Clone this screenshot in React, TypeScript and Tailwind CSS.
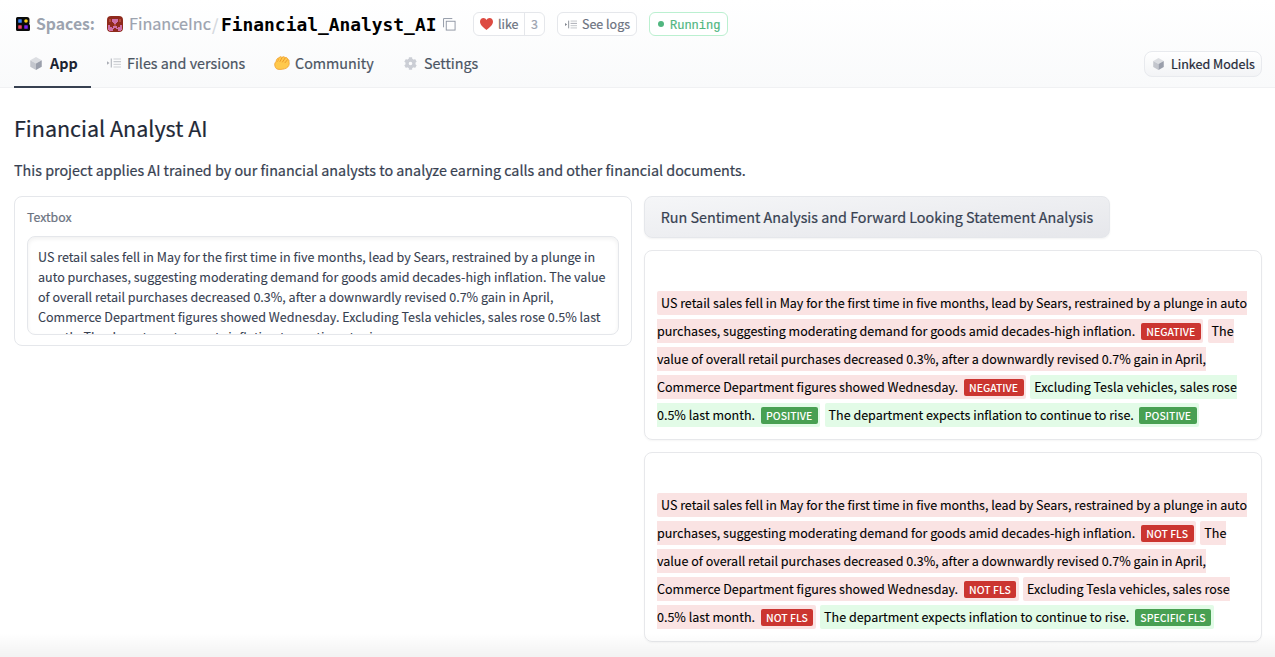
import type { ReactNode } from "react";

type Tone = "red" | "green";
type Segment = { lines: string[]; label: string; tone: Tone };

const SENTIMENT: Segment[] = [
  {
    lines: [
      "US retail sales fell in May for the first time in five months, lead by Sears, restrained by a plunge in auto",
      "purchases, suggesting moderating demand for goods amid decades-high inflation.",
    ],
    label: "NEGATIVE",
    tone: "red",
  },
  {
    lines: [
      "The",
      "value of overall retail purchases decreased 0.3%, after a downwardly revised 0.7% gain in April,",
      "Commerce Department figures showed Wednesday.",
    ],
    label: "NEGATIVE",
    tone: "red",
  },
  { lines: ["Excluding Tesla vehicles, sales rose", "0.5% last month."], label: "POSITIVE", tone: "green" },
  { lines: ["The department expects inflation to continue to rise."], label: "POSITIVE", tone: "green" },
];

const FORWARD_LOOKING: Segment[] = [
  { ...SENTIMENT[0], label: "NOT FLS" },
  { ...SENTIMENT[1], label: "NOT FLS" },
  { ...SENTIMENT[2], label: "NOT FLS", tone: "red" },
  { ...SENTIMENT[3], label: "SPECIFIC FLS" },
];

function SpacesLogo() {
  return (
    <svg viewBox="0 0 28 28" className="h-[14px] w-[14px] shrink-0">
      <path d="M3 0h19a5 5 0 0 1 5 5v5a4 4 0 0 1-1 4 4 4 0 0 1 2 3v8a3 3 0 0 1-3 3H3a3 3 0 0 1-3-3V3a3 3 0 0 1 3-3z" fill="#0a0a0a" />
      <rect x="4.5" y="4.5" width="7" height="7" rx="1" fill="#3b82f6" />
      <circle cx="20" cy="8" r="3.6" fill="#facc15" />
      <rect x="4.5" y="16.5" width="7" height="7" rx="1" fill="#ef4464" />
      <rect x="16.5" y="16.5" width="7" height="7" rx="1" fill="#7c22ee" />
    </svg>
  );
}

function Avatar() {
  return (
    <svg viewBox="0 0 16 16" className="h-4 w-4 shrink-0 rounded-[4px]">
      <rect width="16" height="16" fill="#8f2a1c" />
      <path fill="#cf6fa8" d="M5 3h6v3h-1v1H9v1H7V7H6V6H5zM1 9h2v2h2v1h1v-2h4v2h1v-1h2V9h2v5h-1v1h-3v-2H9v-1H7v1H6v2H2v-1H1z" />
      <path fill="#b5483a" d="M2 3h2v3H2zM12 3h2v3h-2zM7 8h2v2H7z" />
    </svg>
  );
}

function Cube({ className }: { className: string }) {
  return (
    <svg viewBox="0 0 24 26" className={className}>
      <path d="M12 0 23.5 6.5 12 13 .5 6.5z" fill="#dcdee2" />
      <path d="M.5 6.5 12 13v13L.5 19.5z" fill="#c3c6cd" />
      <path d="M23.5 6.5 12 13v13l11.5-6.5z" fill="#9a9fab" />
    </svg>
  );
}

function LogLines({ className }: { className: string }) {
  return (
    <svg viewBox="0 0 28 20" className={className} fill="none">
      <path d="M0 6.5 5 10 0 13.5z" fill="currentColor" />
      <path d="M8.5 1v18" stroke="currentColor" strokeWidth="2" />
      <path d="M13 2h15M13 12.7h15M13 18h15" stroke="currentColor" strokeWidth="2" opacity=".55" />
      <path d="M13 7.4h15" stroke="currentColor" strokeWidth="2" opacity=".8" />
    </svg>
  );
}

function Clap() {
  return (
    <svg viewBox="0 0 32 28" className="h-[14px] w-4 shrink-0">
      <path
        d="M1.5 18c-.5-3 1-5 2.500-7C5 7 7 3.500 9.500 4 11 1 15 .5 16 3c2-2.500 5.500-2 6 .5 2.500-1 5.500 0 5 3 3 .5 3.500 3 3 5 1.500 6-1 10-5 12.500-4 2.500-12 3.500-17.500 2.500C3.500 25.500 2 22 1.500 18z"
        fill="#ffc94d"
        stroke="#f0a030"
        strokeWidth="1.6"
      />
      <path d="M16 3.500 12 11M22 4.500 17 12M27 7.500 22 13.500" stroke="#eb9426" strokeWidth="1.8" strokeLinecap="round" fill="none" />
      <path d="M9.500 5C9 9 7.500 11 5.500 12" stroke="#f0a030" strokeWidth="1.500" fill="none" />
    </svg>
  );
}

function Gear() {
  return (
    <svg viewBox="0 0 24 24" className="h-[13px] w-[13px] shrink-0">
      <g stroke="#cbced5" strokeWidth="6">
        <path d="M12 .5v4M12 19.5v4M2 6.3l3.5 2M18.5 15.7l3.5 2M22 6.3l-3.5 2M5.5 15.7 2 17.7" />
      </g>
      <circle cx="12" cy="12" r="6.3" fill="none" stroke="#cbced5" strokeWidth="6" />
    </svg>
  );
}

function CopyIcon() {
  return (
    <svg viewBox="0 0 14 14" className="h-[13px] w-[13px] shrink-0" fill="none" stroke="#8d94a1">
      <rect x="3.5" y="3.5" width="9.5" height="9.5" />
      <path d="M.6 10V.6H10" />
    </svg>
  );
}

function Heart() {
  return (
    <svg viewBox="0 0 26 24" className="h-3 w-[13px] shrink-0">
      <path d="M13 24C9 20 0 15 0 7.5 0 3 3 0 6.8 0 9.5 0 12 1.5 13 4c1-2.5 3.5-4 6.2-4C23 0 26 3 26 7.5 26 15 17 20 13 24z" fill="#dd4b42" />
    </svg>
  );
}

function Highlight({ lines, label, tone }: Segment) {
  const red = tone === "red";
  return (
    <span className={`mr-[4.3px] rounded-[2px] pt-[1.5px] pr-[2.5px] pb-[3.5px] pl-1 ${red ? "bg-[#fae3e3]" : "bg-[#e2fbe7]"}`}>
      {lines.map((line, i) => (
        <span key={line}>
          {i > 0 && <br />}
          {line}
        </span>
      ))}
      <span
        className={`ml-[5.5px] rounded-[2px] px-[5.5px] py-px align-[-1px] text-[10.45px] leading-none font-medium text-white [-webkit-text-stroke:0] ${red ? "bg-[#cb3530]" : "bg-[#48a052]"}`}
      >
        {label}
      </span>
    </span>
  );
}

function ResultCard({ segments }: { segments: Segment[] }) {
  return (
    <section className="h-[190px] rounded-lg border border-[#e7e8eb] px-3 pt-[37px] shadow-[0_1px_2px_rgba(0,0,0,0.04)]">
      <p className="text-[12.53px] leading-7 whitespace-nowrap text-black [-webkit-text-stroke:0.1px_currentColor]">
        {segments.map((segment) => (
          <Highlight key={segment.lines[0]} {...segment} />
        ))}
      </p>
    </section>
  );
}

function Tab({ icon, children, className }: { icon: ReactNode; children: ReactNode; className: string }) {
  return (
    <a className={`flex h-12 items-center text-[14.33px] ${className}`}>
      {icon}
      {children}
    </a>
  );
}

export default function App() {
  return (
    <div className="relative h-[657px] w-[1275px] overflow-hidden bg-white font-['Noto_Sans_CJK_SC',sans-serif] whitespace-nowrap [-webkit-text-stroke:0.2px_currentColor]">
      <header className="h-[88px] border-b border-[#f0f1f3] bg-linear-to-b from-white to-[#f9fafb] pr-[13px] pl-[14px]">
        <div className="flex h-10 items-center pt-2 leading-6">
          <div className="ml-[2px] flex w-[91px] items-center gap-[6px] text-[15.76px] font-bold text-[#9ca3af] [-webkit-text-stroke:0]">
            <SpacesLogo />
            Spaces:
          </div>
          <Avatar />
          <span className="-mt-[2px] ml-[6px] w-[83px] text-[16.2px] text-[#9ca3af]">FinanceInc</span>
          <span className="w-[9px] text-[16px] text-[#d1d5db]">/</span>
          <h1 className="w-[217px] pt-px font-['DejaVu_Sans_Mono',monospace] text-[17.9px] font-bold text-black [-webkit-text-stroke:0]">
            Financial_Analyst_AI
          </h1>
          <div className="ml-[5px] flex w-[30px]">
            <CopyIcon />
          </div>
          <div className="flex h-6 w-[72px] items-center rounded-md border border-[#e5e7eb] bg-white text-[12.46px] text-[#6b7280]">
            <span className="flex w-[50px] items-center gap-[5px] pl-[6px]">
              <Heart />
              like
            </span>
            <span className="flex h-full flex-1 items-center justify-center border-l border-[#e5e7eb] text-[#9ca3af]">3</span>
          </div>
          <div className="ml-[12px] flex h-6 w-[80px] items-center gap-[5px] rounded-md border border-[#e5e7eb] bg-white pl-[7px] text-[12.47px] text-[#6b7280]">
            <LogLines className="h-[9px] w-3 shrink-0 text-[#81868f]" />
            See logs
          </div>
          <div className="ml-[12px] flex h-6 w-[79px] items-center gap-[6px] rounded-md border border-[#bbf0d0] bg-white pl-2 font-['Liberation_Mono',monospace] text-xs text-[#50b67f]">
            <span className="h-[6px] w-[6px] rounded-full bg-[#50b67f]" />
            <span className="pt-[3px]">Running</span>
          </div>
        </div>
        <nav className="flex items-start">
          <Tab
            className="w-[77px] border-b-2 border-[#374151] pl-4 font-bold text-[#1b2331] [-webkit-text-stroke:0]"
            icon={<Cube className="mr-2 h-[13px] w-3 shrink-0" />}
          >
            App
          </Tab>
          <Tab
            className="ml-[16px] w-[167px] pb-[2px] text-[#4b5563]"
            icon={<LogLines className="mr-[6px] h-[10px] w-[14px] shrink-0 text-[#a9adb5]" />}
          >
            Files and versions
          </Tab>
          <Tab className="w-[130px] gap-[5px] pb-[2px] text-[#4b5563]" icon={<Clap />}>
            Community
          </Tab>
          <Tab className="w-[76px] gap-[7px] pb-[2px] text-[#4b5563]" icon={<Gear />}>
            Settings
          </Tab>
          <a className="mt-[11px] ml-auto flex h-[26px] w-[118px] items-center rounded-lg border border-[#e8eaee] bg-linear-to-b from-white to-[#f3f4f6] pl-2 text-[12.53px] text-[#1f2937]">
            <Cube className="mr-[7px] h-3 w-[11px] shrink-0" />
            Linked Models
          </a>
        </nav>
      </header>

      <main className="px-[14px] pt-[24px]">
        <h2 className="text-[21.5px] leading-8 text-[#1f2937]">Financial Analyst AI</h2>
        <p className="mt-[14px] text-[14.33px] leading-6 text-[#374151]">
          This project applies AI trained by our financial analysts to analyze earning calls and other financial documents.
        </p>

        <div className="mt-[14px] grid grid-cols-[618px_618px] items-start gap-3">
          <section className="h-[150px] rounded-lg border border-[#e5e7eb] px-3 pt-[10px]">
            <div className="text-[12.3px] leading-5 text-[#6b7280]">Textbox</div>
            <div className="mt-[9px] h-[99px] overflow-hidden rounded-lg border border-[#e5e7eb] px-[10px] pt-[10px] text-[12.54px] leading-5 text-[#374151] shadow-[inset_0_2px_4px_rgba(0,0,0,0.06)] [-webkit-text-stroke:0.1px_currentColor]">
              US retail sales fell in May for the first time in five months, lead by Sears, restrained by a plunge in
              <br />
              auto purchases, suggesting moderating demand for goods amid decades-high inflation. The value
              <br />
              of overall retail purchases decreased 0.3%, after a downwardly revised 0.7% gain in April,
              <br />
              Commerce Department figures showed Wednesday. Excluding Tesla vehicles, sales rose 0.5% last
              <br />
              month. The department expects inflation to continue to rise.
            </div>
          </section>

          <div className="flex flex-col gap-3">
            <button className="h-[42px] w-[466px] rounded-lg border border-[#e5e7eb] bg-linear-to-br from-[#f5f6f8] to-[#e6e7eb] text-[14.33px] text-[#374151] shadow-[0_1px_2px_rgba(0,0,0,0.05)]">
              Run Sentiment Analysis and Forward Looking Statement Analysis
            </button>
            <ResultCard segments={SENTIMENT} />
            <ResultCard segments={FORWARD_LOOKING} />
          </div>
        </div>
      </main>
      <div className="pointer-events-none absolute inset-x-0 bottom-0 h-6 bg-linear-to-b from-transparent to-black/5" />
    </div>
  );
}
